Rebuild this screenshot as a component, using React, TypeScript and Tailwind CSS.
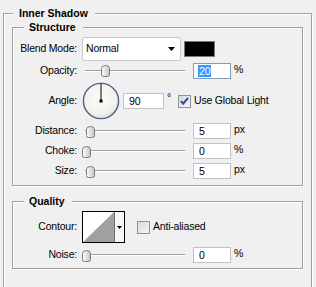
import React from 'react';

const Group: React.FC<{ title: string; className?: string; legendClass?: string; children: React.ReactNode }> = ({
  title,
  className = '',
  legendClass = '',
  children,
}) => (
  <fieldset className={`border border-[#a0a0a0] shadow-[1px_1px_0_#fff,inset_1px_1px_0_#fff] ${className}`}>
    <legend className={`h-[13px] leading-[13px] bg-[#f0f0f0] font-bold text-[10.5px] tracking-normal ${legendClass}`}>{title}</legend>
    {children}
  </fieldset>
);

const Label: React.FC<{ children: React.ReactNode }> = ({ children }) => (
  <div className="w-[64px] shrink-0 mr-[5px] text-right">{children}</div>
);

const Thumb = () => (
  <svg width="9" height="12" viewBox="0 0 9 12">
    <defs>
      <linearGradient id="thumbFill" x1="0" y1="0" x2="1" y2="0">
        <stop offset="0" stopColor="#ffffff" />
        <stop offset="1" stopColor="#c4c4c4" />
      </linearGradient>
    </defs>
    <path
      d="M0.5 3.5 Q0.5 0.5 4.5 0.5 Q8.5 0.5 8.5 3.5 V9.5 Q8.5 11.5 6.5 11.5 H2.5 Q0.5 11.5 0.5 9.5 Z"
      fill="url(#thumbFill)"
      stroke="#7c7c7c"
    />
  </svg>
);

const Slider: React.FC<{ at: number; top?: number }> = ({ at, top = 4 }) => (
  <div className="relative w-[111px] h-[20px] shrink-0">
    <div className="mt-[9px] ml-[3px] w-[100px] h-[2px] border-t border-[#a0a0a0] bg-white" />
    <div className="absolute" style={{ left: at, top }}>
      <Thumb />
    </div>
  </div>
);

const Field: React.FC<{ value: string; w?: string; focus?: boolean }> = ({ value, w = 'w-[38px]', focus }) => (
  <div
    className={`${w} h-[16px] shrink-0 bg-white border ${
      focus ? 'border-[#7f9db9]' : 'border-[#bfc3c8]'
    } flex items-center pl-[4px] leading-[12px]`}
  >
    {focus ? <span className="bg-[#3399ff] text-white px-[1px]">{value}</span> : <span className="pl-[1px]">{value}</span>}
  </div>
);

const SliderRow: React.FC<{ label: string; at: number; value: string; unit: string; focus?: boolean; top?: number }> = ({
  label,
  at,
  value,
  unit,
  focus,
  top,
}) => (
  <div className="flex items-center h-[20px]">
    <Label>{label}</Label>
    <Slider at={at} top={top} />
    <Field value={value} focus={focus} />
    <span className="ml-[3px] -mt-[2px]">{unit}</span>
  </div>
);

const CheckBox: React.FC<{ checked?: boolean }> = ({ checked }) => (
  <svg width="13" height="13" viewBox="0 0 13 13" className="shrink-0">
    <defs>
      <linearGradient id="cbFill" x1="0" y1="0" x2="1" y2="1">
        <stop offset="0" stopColor="#d4d8dc" />
        <stop offset="1" stopColor="#f8f8f8" />
      </linearGradient>
    </defs>
    <rect x="0.5" y="0.5" width="12" height="12" fill="url(#cbFill)" stroke="#8a929c" />
    {checked && <path d="M3 6 L5.2 8.6 L10 3" fill="none" stroke="#2b4fa8" strokeWidth="2" />}
  </svg>
);

const Dial = () => (
  <svg width="38" height="38" viewBox="0 0 38 38" className="shrink-0">
    <defs>
      <radialGradient id="dialFill" cx="0.45" cy="0.4" r="0.6">
        <stop offset="0" stopColor="#fbfbf9" />
        <stop offset="0.8" stopColor="#f1f1ee" />
        <stop offset="1" stopColor="#dcdcd8" />
      </radialGradient>
    </defs>
    <circle cx="19" cy="19" r="17.6" fill="url(#dialFill)" stroke="#4f628f" strokeWidth="1.4" />
    <line x1="19" y1="19" x2="19" y2="1.5" stroke="#000" strokeWidth="1" />
    <rect x="17.5" y="17.5" width="3" height="3" fill="#000" />
  </svg>
);

export default function App() {
  return (
    <div className="w-[316px] h-[287px] overflow-hidden bg-[#f0f0f0] pl-[3px] pt-[7px] text-[10.5px] tracking-[-0.2px] text-black font-['Liberation_Sans',Arial,sans-serif]">
      <Group title="Inner Shadow" className="w-[309px] h-[300px]" legendClass="ml-[9px] pl-[6px] pr-[7px]">
        <div className="px-[8px] pt-[1px]">
          <Group title="Structure" legendClass="ml-[11px] pl-[5px] pr-[7px]">
            <div className="pt-[3px] pb-[4px]">
              <div className="flex items-center h-[24px]">
                <Label>Blend Mode:</Label>
                <div className="w-[99px] h-[24px] bg-white border border-[#c9cbce] rounded-[2px] flex items-center pl-[3px] pr-[5px]">
                  <span className="flex-1">Normal</span>
                  <svg width="7" height="4" viewBox="0 0 7 4">
                    <path d="M0 0 H7 L3.5 4 Z" fill="#000" />
                  </svg>
                </div>
                <div className="ml-[3px] w-[31px] h-[16px] bg-black border border-[#7a7a7a]" />
              </div>
              <SliderRow label="Opacity:" at={19} value="20" unit="%" focus />
              <div className="flex items-center h-[40px]">
                <Label>Angle:</Label>
                <Dial />
                <div className="ml-[3px]">
                  <Field value="90" w="w-[41px]" />
                </div>
                <span className="ml-[3px] -mt-[6px]">°</span>
                <div className="ml-[7px] flex items-center">
                  <CheckBox checked />
                  <span className="ml-[3px]">Use Global Light</span>
                </div>
              </div>
              <SliderRow label="Distance:" at={4} value="5" unit="px" top={5} />
              <SliderRow label="Choke:" at={0} value="0" unit="%" top={5} />
              <SliderRow label="Size:" at={4} value="5" unit="px" top={5} />
            </div>
          </Group>
          <Group title="Quality" className="mt-[9px]" legendClass="ml-[11px] pl-[5px] pr-[7px]">
            <div className="pt-[3px] pb-[3px]">
              <div className="flex items-center h-[32px]">
                <Label>Contour:</Label>
                <div className="w-[43px] h-[32px] border border-black flex bg-white">
                  <svg width="31" height="30" viewBox="0 0 31 30">
                    <rect width="31" height="30" fill="#fff" />
                    <path d="M0 30 L31 0 V30 Z" fill="#a0a0a0" />
                  </svg>
                  <div className="w-[1px] h-full bg-[#707070]" />
                  <div className="flex-1 flex items-center justify-center bg-[#f6f6f6]">
                    <svg width="5" height="3" viewBox="0 0 5 3">
                      <path d="M0 0 H5 L2.5 3 Z" fill="#000" />
                    </svg>
                  </div>
                </div>
                <div className="ml-[12px] flex items-center">
                  <CheckBox />
                  <span className="ml-[3px]">Anti-aliased</span>
                </div>
              </div>
              <div className="mt-[2px]">
                <SliderRow label="Noise:" at={0} value="0" unit="%" top={5} />
              </div>
            </div>
          </Group>
        </div>
      </Group>
    </div>
  );
}
